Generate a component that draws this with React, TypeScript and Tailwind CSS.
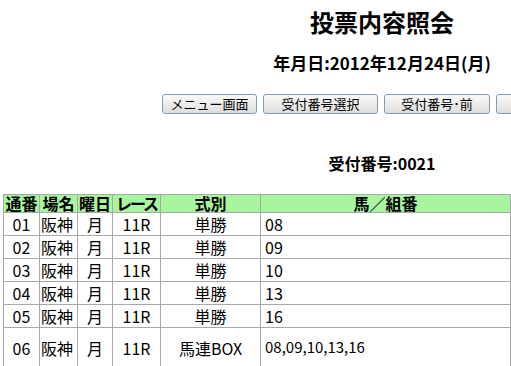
import React from "react";

const rows = [
  { no: "01", place: "阪神", day: "月", race: "11R", kind: "単勝", horse: "08" },
  { no: "02", place: "阪神", day: "月", race: "11R", kind: "単勝", horse: "09" },
  { no: "03", place: "阪神", day: "月", race: "11R", kind: "単勝", horse: "10" },
  { no: "04", place: "阪神", day: "月", race: "11R", kind: "単勝", horse: "13" },
  { no: "05", place: "阪神", day: "月", race: "11R", kind: "単勝", horse: "16" },
];

function Btn({ label, w }: { label: string; w: string }) {
  return (
    <button
      className={`${w} h-[20px] shrink-0 rounded-[3px] border border-[#7f9db9] bg-gradient-to-b from-[#fafafa] to-[#dedede] text-[13px] leading-[18px] text-black`}
    >
      {label}
    </button>
  );
}

const headers: { t: string; cls: string }[] = [
  { t: "通番", cls: "" },
  { t: "場名", cls: "" },
  { t: "曜日", cls: "" },
  { t: "レース", cls: "tracking-[-2px]" },
  { t: "式別", cls: "" },
  { t: "馬／組番", cls: "" },
];

export default function App() {
  const font = { fontFamily: '"Noto Sans CJK JP", "Noto Sans", sans-serif' };
  return (
    <div className="w-[511px] h-[366px] overflow-hidden bg-white text-black" style={font}>
      <div className="w-[764px] flex flex-col items-center">
        <div className="mt-[6px] h-[32px] text-[24px] leading-[32px] font-bold">投票内容照会</div>
        <div className="mt-[13px] h-[24px] text-[17px] leading-[24px] font-bold">年月日:2012年12月24日(月)</div>
        <div className="mt-[19px] flex gap-[6px]">
          <Btn label="メニュー画面" w="w-[95px]" />
          <Btn label="受付番号選択" w="w-[115px]" />
          <Btn label="受付番号･前" w="w-[106px]" />
          <Btn label="受付番号･次" w="w-[106px]" />
        </div>
        <div className="mt-[37px] h-[24px] text-[16px] leading-[24px] font-bold">受付番号:0021</div>
      </div>
      <div className="ml-[3px] mt-[19px]">
        <table className="w-[508px] border-collapse table-fixed border border-[#a8a8a8]">
          <colgroup>
            <col className="w-[36px]" />
            <col className="w-[38px]" />
            <col className="w-[35px]" />
            <col className="w-[48px]" />
            <col className="w-[100px]" />
            <col />
          </colgroup>
          <thead>
            <tr className="bg-[#a8f5a0] h-[18px]">
              {headers.map((h) => (
                <th
                  key={h.t}
                  className={`border border-[#a8a8a8] p-0 text-[16px] leading-[17px] font-bold text-center whitespace-nowrap overflow-visible ${h.cls}`}
                >
                  {h.t}
                </th>
              ))}
            </tr>
          </thead>
          <tbody className="text-[16px]">
            {rows.map((r) => (
              <tr key={r.no} className="h-[23px]">
                <td className="border border-[#a8a8a8] p-0 text-center leading-[22px]">{r.no}</td>
                <td className="border border-[#a8a8a8] p-0 pl-[1px] leading-[22px] whitespace-nowrap">{r.place}</td>
                <td className="border border-[#a8a8a8] p-0 text-center leading-[22px]">{r.day}</td>
                <td className="border border-[#a8a8a8] p-0 text-center leading-[22px]">{r.race}</td>
                <td className="border border-[#a8a8a8] p-0 text-center leading-[22px]">{r.kind}</td>
                <td className="border border-[#a8a8a8] p-0 pl-[4px] leading-[22px]">{r.horse}</td>
              </tr>
            ))}
            <tr className="h-[40px]">
              <td className="border border-[#a8a8a8] p-0 text-center">06</td>
              <td className="border border-[#a8a8a8] p-0 pl-[1px] whitespace-nowrap">阪神</td>
              <td className="border border-[#a8a8a8] p-0 text-center">月</td>
              <td className="border border-[#a8a8a8] p-0 text-center">11R</td>
              <td className="border border-[#a8a8a8] p-0 text-center whitespace-nowrap">馬連BOX</td>
              <td className="border border-[#a8a8a8] p-0 pl-[4px] text-[15px]">08,09,10,13,16</td>
            </tr>
          </tbody>
        </table>
      </div>
    </div>
  );
}
